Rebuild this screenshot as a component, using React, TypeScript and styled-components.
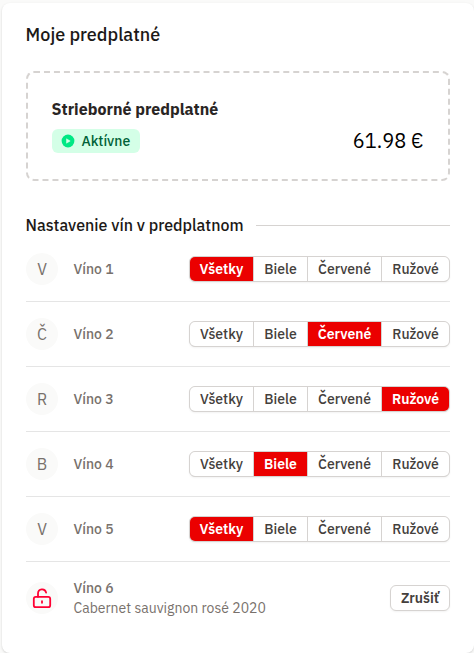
import React from 'react';
import styled, { createGlobalStyle } from 'styled-components';

const GlobalStyle = createGlobalStyle`
  *, *::before, *::after { box-sizing: border-box; }
  body {
    margin: 0;
    background: #fafaf9;
    font-family: "IBM Plex Sans", Roboto, "Liberation Sans", sans-serif;
    color: #1c1917;
    overflow: hidden;
  }
  button { font: inherit; margin: 0; }
`;

const Page = styled.main`
  height: 653px;
  padding: 3px 0 0 2px;
`;

const Card = styled.section`
  height: 650px;
  padding: 18px 24px 0;
  background: #fff;
  border-radius: 8px;
  box-shadow: 0 1px 3px rgba(0, 0, 0, 0.1), 0 1px 2px rgba(0, 0, 0, 0.06);
`;

const Title = styled.h1`
  margin: 0 0 0 -0.4px;
  height: 28px;
  font-size: 18px;
  line-height: 28px;
  font-weight: 500;
`;

const Plan = styled.div`
  display: flex;
  justify-content: space-between;
  height: 110px;
  margin-top: 22px;
  padding: 24px;
  border: 2px dashed #d6d3d1;
  border-radius: 8px;
`;

const PlanName = styled.h2`
  margin: 0 0 0 -0.4px;
  font-size: 16px;
  line-height: 24px;
  font-weight: 700;
  color: #292524;
`;

const Status = styled.span`
  display: flex;
  align-items: center;
  gap: 6.5px;
  width: 88px;
  height: 24px;
  margin-top: 8px;
  padding-left: 9px;
  border-radius: 6px;
  background: #d4ffe7;
  color: #006238;
  font-size: 14px;
  font-weight: 500;
  svg { flex: none; }
`;

const Price = styled.div`
  align-self: flex-end;
  height: 28px;
  margin-right: 0.5px;
  line-height: 28px;
  font-size: 20px;
  color: #000;
`;

const SectionHead = styled.div`
  display: flex;
  align-items: center;
  gap: 12.4px;
  height: 24px;
  margin-top: 32px;
  &::after {
    content: '';
    flex: 1;
    height: 1px;
    background: #d6d3d1;
  }
`;

const SectionTitle = styled.h2`
  margin: 0 0 0 -0.4px;
  font-size: 16px;
  line-height: 24px;
  font-weight: 500;
`;

const List = styled.ul`
  list-style: none;
  margin: 0;
  padding: 0;
`;

const Row = styled.li<{ $tall?: boolean }>`
  display: flex;
  align-items: center;
  height: ${p => (p.$tall ? 72 : 65)}px;
  border-bottom: ${p => (p.$tall ? '0' : '1px solid #e5e5e5')};
`;

const Avatar = styled.span`
  display: flex;
  align-items: center;
  justify-content: center;
  flex: none;
  width: 32px;
  height: 32px;
  margin-right: 15.5px;
  border-radius: 50%;
  background: #fafaf9;
  color: #78716c;
  font-size: 16px;
`;

const Info = styled.div`
  flex: 1;
  font-size: 14px;
  line-height: 20px;
  color: #78716c;
`;

const WineName = styled.div`
  font-weight: 500;
`;

const WineDetail = styled.div`
  font-weight: 400;
`;

const Segments = styled.div`
  display: grid;
  grid-template-columns: 63px 53px 73px 67px;
  gap: 1px;
  height: 26px;
  width: 261px;
  border: 1px solid #d6d3d1;
  border-radius: 6px;
  background: #d6d3d1;
  overflow: hidden;
  box-shadow: 0 1px 2px rgba(0, 0, 0, 0.05);
`;

const Segment = styled.button<{ $active: boolean }>`
  padding: 0;
  border: 0;
  background: ${p => (p.$active ? '#eb0000' : '#fff')};
  color: ${p => (p.$active ? '#fff' : '#44403c')};
  font-size: 14px;
  line-height: 24px;
  font-weight: ${p => (p.$active ? 600 : 500)};
`;

const CancelButton = styled.button`
  width: 60px;
  height: 26px;
  padding: 0;
  border: 1px solid #d6d3d1;
  border-radius: 6px;
  background: #fff;
  box-shadow: 0 1px 2px rgba(0, 0, 0, 0.05);
  color: #44403c;
  font-size: 14px;
  line-height: 24px;
  font-weight: 600;
`;

const kinds = ['Všetky', 'Biele', 'Červené', 'Ružové'];

const wines = [
  { initial: 'V', name: 'Víno 1', kind: 'Všetky' },
  { initial: 'Č', name: 'Víno 2', kind: 'Červené' },
  { initial: 'R', name: 'Víno 3', kind: 'Ružové' },
  { initial: 'B', name: 'Víno 4', kind: 'Biele' },
  { initial: 'V', name: 'Víno 5', kind: 'Všetky' },
];

const PlayIcon = () => (
  <svg width="14" height="14" viewBox="0 0 14 14">
    <circle cx="7" cy="7" r="6.4" fill="#00e884" />
    <path d="M5.5 4.8v4.4L9.2 7z" fill="#d4ffe7" stroke="#d4ffe7" strokeWidth=".5" strokeLinejoin="round" />
  </svg>
);

const UnlockIcon = () => (
  <svg width="24" height="24" viewBox="0 0 24 24" fill="none" stroke="#ff0033" strokeWidth="1.8" strokeLinecap="round" strokeLinejoin="round">
    <rect x="3.8" y="10.8" width="16.4" height="10.4" rx="2" />
    <path d="M8 10.8V7.4a4.1 4.1 0 0 1 8.1-.8M12 15.2v1.6" />
  </svg>
);

export default function App() {
  return (
    <>
      <GlobalStyle />
      <Page>
        <Card>
          <Title>Moje predplatné</Title>
          <Plan>
            <div>
              <PlanName>Strieborné predplatné</PlanName>
              <Status><PlayIcon />Aktívne</Status>
            </div>
            <Price>61.98 €</Price>
          </Plan>
          <SectionHead>
            <SectionTitle>Nastavenie vín v predplatnom</SectionTitle>
          </SectionHead>
          <List>
            {wines.map(wine => (
              <Row key={wine.name}>
                <Avatar>{wine.initial}</Avatar>
                <Info><WineName>{wine.name}</WineName></Info>
                <Segments>
                  {kinds.map(kind => (
                    <Segment key={kind} $active={kind === wine.kind}>{kind}</Segment>
                  ))}
                </Segments>
              </Row>
            ))}
            <Row $tall>
              <Avatar><UnlockIcon /></Avatar>
              <Info>
                <WineName>Víno 6</WineName>
                <WineDetail>Cabernet sauvignon rosé 2020</WineDetail>
              </Info>
              <CancelButton>Zrušiť</CancelButton>
            </Row>
          </List>
        </Card>
      </Page>
    </>
  );
}
